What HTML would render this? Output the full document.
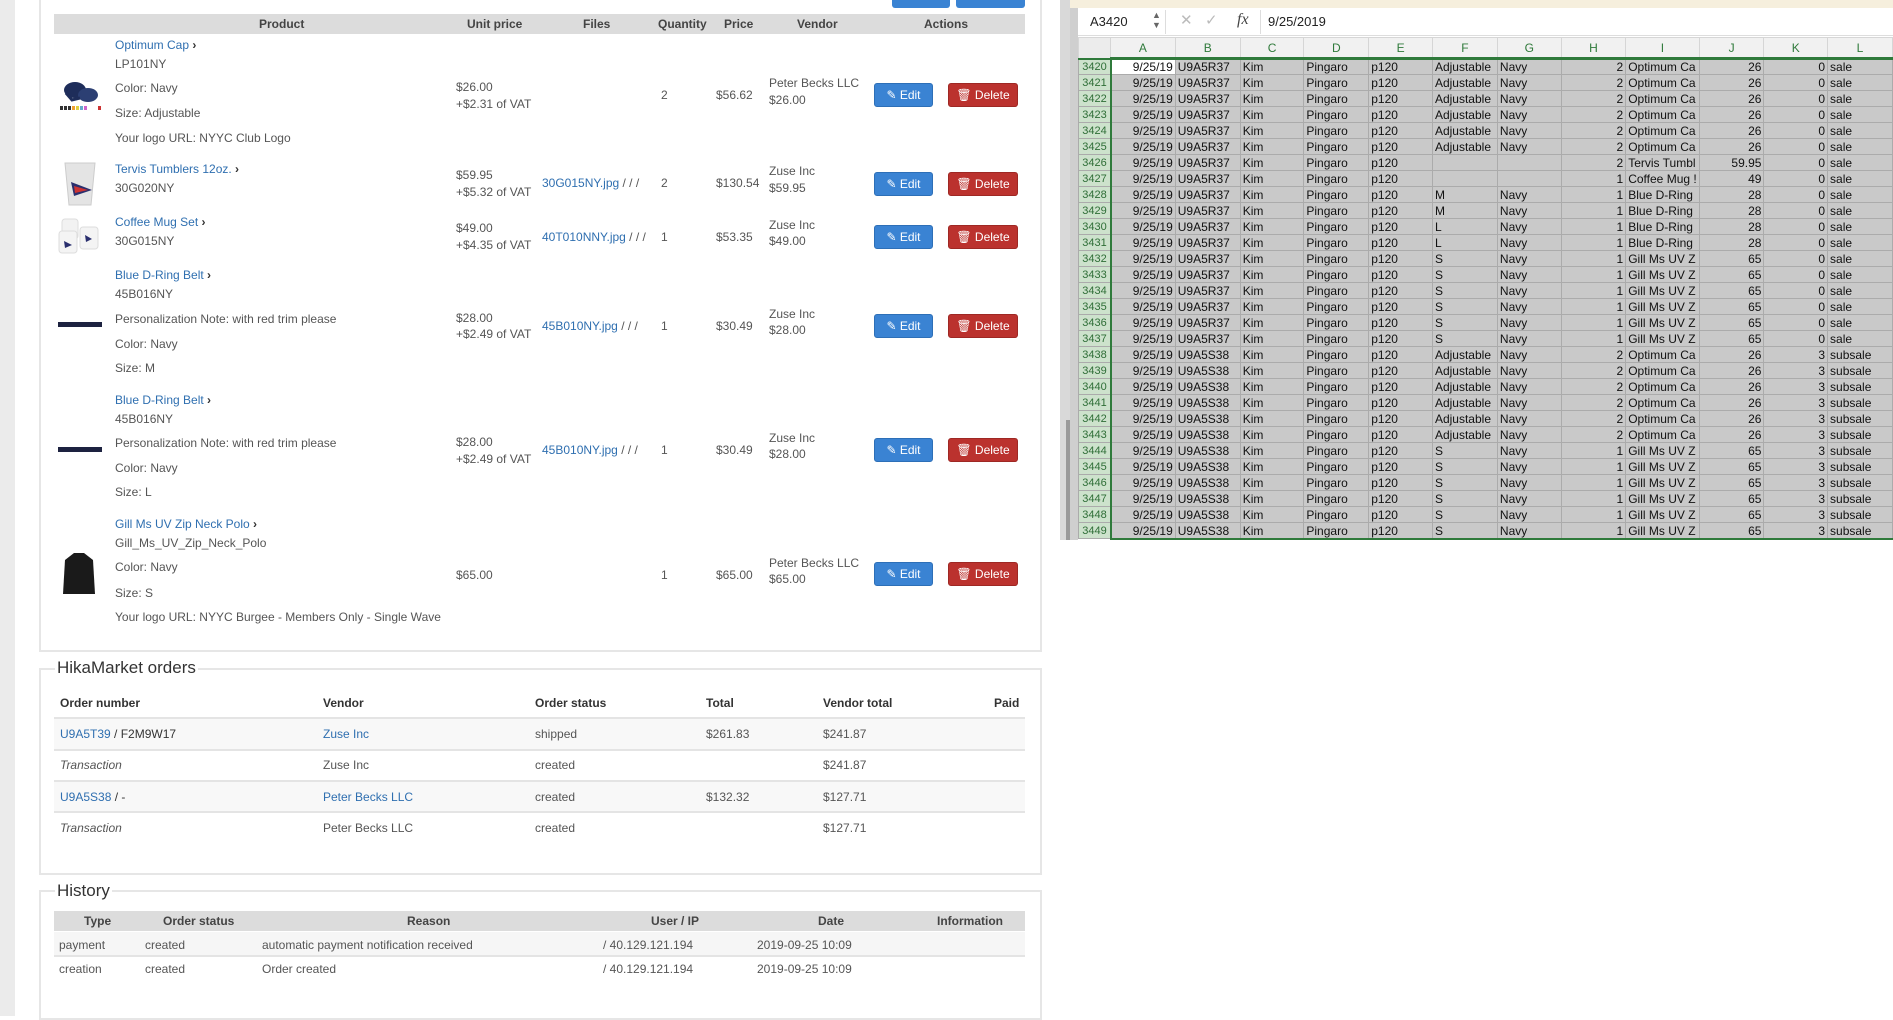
<!DOCTYPE html>
<html><head><meta charset="utf-8"><style>
*{box-sizing:border-box;margin:0;padding:0}
body{width:1893px;height:1016px;position:relative;overflow:hidden;background:#fff;font-family:"Liberation Sans",sans-serif;font-size:12px;color:#555}
.a{position:absolute;white-space:nowrap;line-height:14px}
.l{color:#2f6fb0}
.b{font-weight:bold;color:#333}
.btn{position:absolute;height:24px;border-radius:3px;color:#fff;font-size:12px;line-height:22px;text-align:center}
.ed{width:59px;background:#3a83d3;border:1px solid #2d6fb7}
.de{width:70px;background:#bb322e;border:1px solid #9e2824}
.th{position:absolute;background:#dcdcdc}
.fs{position:absolute;border:2px solid #e6e6e6}
.lg{position:absolute;background:#fff;font-size:17px;color:#333;padding:0 2px;line-height:20px}
.hl{position:absolute;height:2px;background:#e4e4e4}
table.x{position:absolute;left:1078px;top:37px;border-collapse:collapse;font-family:"Liberation Sans Narrow","Liberation Sans",sans-serif;font-size:12px;color:#111;table-layout:fixed}
table.x td{height:16px;border:1px solid #ababab;background:#c9c9c9;padding:0 2px;line-height:14px;overflow:hidden;white-space:nowrap}
table.x td.n{background:#cde2cc;color:#2f6e37;font-size:11px;text-align:center;padding:0}
table.x td.r{text-align:right}
table.x tr.h td{height:21px;background:#f1f1f1;color:#2f7a3b;text-align:center;border-color:#d6d6d6;border-bottom:2px solid #2f7a3b}
</style></head><body>
<!-- left page -->
<div style="position:absolute;left:0;top:0;width:15px;height:1016px;background:#ebebeb"></div>
<div style="position:absolute;left:1060px;top:0;width:18px;height:540px;background:#d9d9d9"></div>
<div style="position:absolute;left:1066px;top:420px;width:5px;height:120px;background:#9a9a9a"></div>

<div style="position:absolute;left:892px;top:0;width:58px;height:8px;background:#3a83d3;border-radius:0 0 3px 3px"></div>
<div style="position:absolute;left:956px;top:0;width:69px;height:8px;background:#3a83d3;border-radius:0 0 3px 3px"></div>

<div style="position:absolute;left:39px;top:0;width:1003px;height:652px;border:2px solid #e6e6e6;border-top:none"></div>
<div class="th" style="left:54px;top:14px;width:971px;height:20px"></div>
<div class="a b" style="left:259px;top:17px;font-weight:bold;color:#444">Product</div>
<div class="a b" style="left:467px;top:17px;color:#444">Unit price</div>
<div class="a b" style="left:583px;top:17px;color:#444">Files</div>
<div class="a b" style="left:658px;top:17px;color:#444">Quantity</div>
<div class="a b" style="left:724px;top:17px;color:#444">Price</div>
<div class="a b" style="left:797px;top:17px;color:#444">Vendor</div>
<div class="a b" style="left:924px;top:17px;color:#444">Actions</div>

<!-- images -->
<svg style="position:absolute;left:58px;top:78px" width="46" height="36"><ellipse cx="17" cy="12" rx="11" ry="8" fill="#1e2d5a"/><ellipse cx="30" cy="17" rx="10" ry="7" fill="#2c3f73"/><path d="M8 15 L14 22 L22 20" stroke="#1e2d5a" stroke-width="3" fill="none"/><g fill="#333"><rect x="2" y="28" width="3" height="4"/><rect x="6" y="28" width="3" height="4"/><rect x="10" y="28" width="3" height="4"/></g><rect x="14" y="28" width="3" height="4" fill="#f0a030"/><rect x="18" y="28" width="3" height="4" fill="#e0d040"/><rect x="22" y="28" width="3" height="4" fill="#6ac"/><rect x="26" y="28" width="3" height="4" fill="#c6c"/><rect x="40" y="28" width="3" height="4" fill="#c33"/></svg>
<svg style="position:absolute;left:62px;top:160px" width="36" height="48"><path d="M3 3 L33 3 L29 45 L7 45 Z" fill="#e4e4e4" stroke="#ccc"/><path d="M9 22 L30 30 L12 36 Z" fill="#2a2f6e"/><path d="M12 26 L26 30 L13 33Z" fill="#c33"/></svg>
<svg style="position:absolute;left:56px;top:215px" width="46" height="40"><rect x="6" y="4" width="16" height="20" rx="3" fill="#f2f2f2" stroke="#ddd"/><rect x="3" y="16" width="18" height="22" rx="3" fill="#f4f4f4" stroke="#ddd"/><rect x="24" y="12" width="18" height="22" rx="3" fill="#f4f4f4" stroke="#ddd"/><path d="M8 26 L16 30 L9 33Z" fill="#2a2f6e"/><path d="M29 20 L36 24 L30 27Z" fill="#2a2f6e"/></svg>
<div style="position:absolute;left:58px;top:322px;width:44px;height:5px;background:#1d2240"></div>
<div style="position:absolute;left:58px;top:447px;width:44px;height:5px;background:#1d2240"></div>
<svg style="position:absolute;left:62px;top:552px" width="34" height="44"><path d="M12 1 L22 1 L31 8 L33 42 L1 42 L3 8 Z" fill="#1a1a1a"/></svg>

<!-- row1 -->
<div class="a l" style="left:115px;top:38px">Optimum Cap <b style="color:#333">›</b></div>
<div class="a" style="left:115px;top:57px">LP101NY</div>
<div class="a" style="left:115px;top:81px">Color: Navy</div>
<div class="a" style="left:115px;top:106px">Size: Adjustable</div>
<div class="a" style="left:115px;top:131px">Your logo URL: NYYC Club Logo</div>
<div class="a" style="left:456px;top:80px">$26.00</div><div class="a" style="left:456px;top:97px">+$2.31 of VAT</div>
<div class="a" style="left:661px;top:88px">2</div><div class="a" style="left:716px;top:88px">$56.62</div>
<div class="a" style="left:769px;top:76px">Peter Becks LLC</div><div class="a" style="left:769px;top:93px">$26.00</div>
<!-- row2 -->
<div class="a l" style="left:115px;top:162px">Tervis Tumblers 12oz. <b style="color:#333">›</b></div>
<div class="a" style="left:115px;top:181px">30G020NY</div>
<div class="a" style="left:456px;top:168px">$59.95</div><div class="a" style="left:456px;top:185px">+$5.32 of VAT</div>
<div class="a l" style="left:542px;top:176px">30G015NY.jpg <span style="color:#555">/ / /</span></div>
<div class="a" style="left:661px;top:176px">2</div><div class="a" style="left:716px;top:176px">$130.54</div>
<div class="a" style="left:769px;top:164px">Zuse Inc</div><div class="a" style="left:769px;top:181px">$59.95</div>
<!-- row3 -->
<div class="a l" style="left:115px;top:215px">Coffee Mug Set <b style="color:#333">›</b></div>
<div class="a" style="left:115px;top:234px">30G015NY</div>
<div class="a" style="left:456px;top:221px">$49.00</div><div class="a" style="left:456px;top:238px">+$4.35 of VAT</div>
<div class="a l" style="left:542px;top:230px">40T010NNY.jpg <span style="color:#555">/ / /</span></div>
<div class="a" style="left:661px;top:230px">1</div><div class="a" style="left:716px;top:230px">$53.35</div>
<div class="a" style="left:769px;top:218px">Zuse Inc</div><div class="a" style="left:769px;top:234px">$49.00</div>
<!-- row4 -->
<div class="a l" style="left:115px;top:268px">Blue D-Ring Belt <b style="color:#333">›</b></div>
<div class="a" style="left:115px;top:287px">45B016NY</div>
<div class="a" style="left:115px;top:312px">Personalization Note: with red trim please</div>
<div class="a" style="left:115px;top:337px">Color: Navy</div>
<div class="a" style="left:115px;top:361px">Size: M</div>
<div class="a" style="left:456px;top:311px">$28.00</div><div class="a" style="left:456px;top:327px">+$2.49 of VAT</div>
<div class="a l" style="left:542px;top:319px">45B010NY.jpg <span style="color:#555">/ / /</span></div>
<div class="a" style="left:661px;top:319px">1</div><div class="a" style="left:716px;top:319px">$30.49</div>
<div class="a" style="left:769px;top:307px">Zuse Inc</div><div class="a" style="left:769px;top:323px">$28.00</div>
<!-- row5 -->
<div class="a l" style="left:115px;top:393px">Blue D-Ring Belt <b style="color:#333">›</b></div>
<div class="a" style="left:115px;top:412px">45B016NY</div>
<div class="a" style="left:115px;top:436px">Personalization Note: with red trim please</div>
<div class="a" style="left:115px;top:461px">Color: Navy</div>
<div class="a" style="left:115px;top:485px">Size: L</div>
<div class="a" style="left:456px;top:435px">$28.00</div><div class="a" style="left:456px;top:452px">+$2.49 of VAT</div>
<div class="a l" style="left:542px;top:443px">45B010NY.jpg <span style="color:#555">/ / /</span></div>
<div class="a" style="left:661px;top:443px">1</div><div class="a" style="left:716px;top:443px">$30.49</div>
<div class="a" style="left:769px;top:431px">Zuse Inc</div><div class="a" style="left:769px;top:447px">$28.00</div>
<!-- row6 -->
<div class="a l" style="left:115px;top:517px">Gill Ms UV Zip Neck Polo <b style="color:#333">›</b></div>
<div class="a" style="left:115px;top:536px">Gill_Ms_UV_Zip_Neck_Polo</div>
<div class="a" style="left:115px;top:560px">Color: Navy</div>
<div class="a" style="left:115px;top:586px">Size: S</div>
<div class="a" style="left:115px;top:610px">Your logo URL: NYYC Burgee - Members Only - Single Wave</div>
<div class="a" style="left:456px;top:568px">$65.00</div>
<div class="a" style="left:661px;top:568px">1</div><div class="a" style="left:716px;top:568px">$65.00</div>
<div class="a" style="left:769px;top:556px">Peter Becks LLC</div><div class="a" style="left:769px;top:572px">$65.00</div>

<!-- buttons -->
<div class="btn ed" style="left:874px;top:83px">✎ Edit</div><div class="btn de" style="left:948px;top:83px">🗑 Delete</div>
<div class="btn ed" style="left:874px;top:172px">✎ Edit</div><div class="btn de" style="left:948px;top:172px">🗑 Delete</div>
<div class="btn ed" style="left:874px;top:225px">✎ Edit</div><div class="btn de" style="left:948px;top:225px">🗑 Delete</div>
<div class="btn ed" style="left:874px;top:314px">✎ Edit</div><div class="btn de" style="left:948px;top:314px">🗑 Delete</div>
<div class="btn ed" style="left:874px;top:438px">✎ Edit</div><div class="btn de" style="left:948px;top:438px">🗑 Delete</div>
<div class="btn ed" style="left:874px;top:562px">✎ Edit</div><div class="btn de" style="left:948px;top:562px">🗑 Delete</div>

<!-- HikaMarket orders -->
<div class="fs" style="left:39px;top:668px;width:1003px;height:207px"></div>
<div class="lg" style="left:55px;top:658px">HikaMarket orders</div>
<div class="a b" style="left:60px;top:696px">Order number</div>
<div class="a b" style="left:323px;top:696px">Vendor</div>
<div class="a b" style="left:535px;top:696px">Order status</div>
<div class="a b" style="left:706px;top:696px">Total</div>
<div class="a b" style="left:823px;top:696px">Vendor total</div>
<div class="a b" style="left:994px;top:696px">Paid</div>
<div style="position:absolute;left:54px;top:718px;width:971px;height:32px;background:#f8f8f8"></div>
<div style="position:absolute;left:54px;top:781px;width:971px;height:31px;background:#f8f8f8"></div>
<div class="hl" style="left:54px;top:717px;width:971px"></div>
<div class="hl" style="left:54px;top:749px;width:971px"></div>
<div class="hl" style="left:54px;top:780px;width:971px"></div>
<div class="hl" style="left:54px;top:811px;width:971px"></div>
<div class="a" style="left:60px;top:727px"><span class="l">U9A5T39</span> <span style="color:#333">/ F2M9W17</span></div>
<div class="a l" style="left:323px;top:727px">Zuse Inc</div>
<div class="a" style="left:535px;top:727px">shipped</div><div class="a" style="left:706px;top:727px">$261.83</div><div class="a" style="left:823px;top:727px">$241.87</div>
<div class="a" style="left:60px;top:758px;font-style:italic">Transaction</div>
<div class="a" style="left:323px;top:758px">Zuse Inc</div><div class="a" style="left:535px;top:758px">created</div><div class="a" style="left:823px;top:758px">$241.87</div>
<div class="a" style="left:60px;top:790px"><span class="l">U9A5S38</span> <span style="color:#333">/ -</span></div>
<div class="a l" style="left:323px;top:790px">Peter Becks LLC</div>
<div class="a" style="left:535px;top:790px">created</div><div class="a" style="left:706px;top:790px">$132.32</div><div class="a" style="left:823px;top:790px">$127.71</div>
<div class="a" style="left:60px;top:821px;font-style:italic">Transaction</div>
<div class="a" style="left:323px;top:821px">Peter Becks LLC</div><div class="a" style="left:535px;top:821px">created</div><div class="a" style="left:823px;top:821px">$127.71</div>

<!-- History -->
<div class="fs" style="left:39px;top:890px;width:1003px;height:130px"></div>
<div class="lg" style="left:55px;top:881px">History</div>
<div class="th" style="left:54px;top:911px;width:971px;height:20px"></div>
<div class="a b" style="left:84px;top:914px;color:#444">Type</div>
<div class="a b" style="left:163px;top:914px;color:#444">Order status</div>
<div class="a b" style="left:407px;top:914px;color:#444">Reason</div>
<div class="a b" style="left:651px;top:914px;color:#444">User / IP</div>
<div class="a b" style="left:818px;top:914px;color:#444">Date</div>
<div class="a b" style="left:937px;top:914px;color:#444">Information</div>
<div style="position:absolute;left:54px;top:932px;width:971px;height:25px;background:#f6f6f6;border-bottom:2px solid #e4e4e4"></div>
<div class="a" style="left:59px;top:938px">payment</div><div class="a" style="left:145px;top:938px">created</div><div class="a" style="left:262px;top:938px">automatic payment notification received</div><div class="a" style="left:603px;top:938px">/ 40.129.121.194</div><div class="a" style="left:757px;top:938px">2019-09-25 10:09</div>
<div class="a" style="left:59px;top:962px">creation</div><div class="a" style="left:145px;top:962px">created</div><div class="a" style="left:262px;top:962px">Order created</div><div class="a" style="left:603px;top:962px">/ 40.129.121.194</div><div class="a" style="left:757px;top:962px">2019-09-25 10:09</div>

<!-- spreadsheet -->
<div style="position:absolute;left:1070px;top:0;width:823px;height:8px;background:#f6efdd"></div>
<div style="position:absolute;left:1070px;top:8px;width:8px;height:532px;background:#cfcfcf"></div>
<div style="position:absolute;left:1078px;top:8px;width:815px;height:28px;background:#fff;border-bottom:1px solid #ddd"></div>
<div class="a" style="left:1090px;top:15px;font-size:13px;color:#222">A3420</div>
<div class="a" style="left:1152px;top:10px;font-size:9px;color:#666;line-height:10px">▲<br>▼</div>
<div style="position:absolute;left:1165px;top:10px;width:1px;height:24px;background:#ddd"></div>
<div class="a" style="left:1180px;top:14px;font-size:15px;color:#bbb">✕</div>
<div class="a" style="left:1205px;top:14px;font-size:15px;color:#bbb">✓</div>
<div class="a" style="left:1237px;top:13px;font-size:16px;color:#444;font-family:'Liberation Serif',serif;font-style:italic">fx</div>
<div style="position:absolute;left:1260px;top:10px;width:1px;height:24px;background:#ddd"></div>
<div class="a" style="left:1268px;top:15px;font-size:13px;color:#222">9/25/2019</div>
<div style="position:absolute;left:1078px;top:37px;width:32px;height:21px;background:#f1f1f1"></div>
<table class="x">
<colgroup><col style="width:32px"><col style="width:65px"><col style="width:65px"><col style="width:64px"><col style="width:65px"><col style="width:64px"><col style="width:65px"><col style="width:64px"><col style="width:65px"><col style="width:64px"><col style="width:65px"><col style="width:64px"><col style="width:65px"></colgroup>
<tr class="h"><td style="background:#ececec;border-bottom-color:#2f7a3b"></td><td>A</td><td>B</td><td>C</td><td>D</td><td>E</td><td>F</td><td>G</td><td>H</td><td>I</td><td>J</td><td>K</td><td>L</td></tr>
<tr><td class="n">3420</td><td class="r" style="background:#fff">9/25/19</td><td>U9A5R37</td><td>Kim</td><td>Pingaro</td><td>p120</td><td>Adjustable</td><td>Navy</td><td class="r">2</td><td>Optimum Ca</td><td class="r">26</td><td class="r">0</td><td>sale</td></tr>
<tr><td class="n">3421</td><td class="r">9/25/19</td><td>U9A5R37</td><td>Kim</td><td>Pingaro</td><td>p120</td><td>Adjustable</td><td>Navy</td><td class="r">2</td><td>Optimum Ca</td><td class="r">26</td><td class="r">0</td><td>sale</td></tr>
<tr><td class="n">3422</td><td class="r">9/25/19</td><td>U9A5R37</td><td>Kim</td><td>Pingaro</td><td>p120</td><td>Adjustable</td><td>Navy</td><td class="r">2</td><td>Optimum Ca</td><td class="r">26</td><td class="r">0</td><td>sale</td></tr>
<tr><td class="n">3423</td><td class="r">9/25/19</td><td>U9A5R37</td><td>Kim</td><td>Pingaro</td><td>p120</td><td>Adjustable</td><td>Navy</td><td class="r">2</td><td>Optimum Ca</td><td class="r">26</td><td class="r">0</td><td>sale</td></tr>
<tr><td class="n">3424</td><td class="r">9/25/19</td><td>U9A5R37</td><td>Kim</td><td>Pingaro</td><td>p120</td><td>Adjustable</td><td>Navy</td><td class="r">2</td><td>Optimum Ca</td><td class="r">26</td><td class="r">0</td><td>sale</td></tr>
<tr><td class="n">3425</td><td class="r">9/25/19</td><td>U9A5R37</td><td>Kim</td><td>Pingaro</td><td>p120</td><td>Adjustable</td><td>Navy</td><td class="r">2</td><td>Optimum Ca</td><td class="r">26</td><td class="r">0</td><td>sale</td></tr>
<tr><td class="n">3426</td><td class="r">9/25/19</td><td>U9A5R37</td><td>Kim</td><td>Pingaro</td><td>p120</td><td></td><td></td><td class="r">2</td><td>Tervis Tumbl</td><td class="r">59.95</td><td class="r">0</td><td>sale</td></tr>
<tr><td class="n">3427</td><td class="r">9/25/19</td><td>U9A5R37</td><td>Kim</td><td>Pingaro</td><td>p120</td><td></td><td></td><td class="r">1</td><td>Coffee Mug !</td><td class="r">49</td><td class="r">0</td><td>sale</td></tr>
<tr><td class="n">3428</td><td class="r">9/25/19</td><td>U9A5R37</td><td>Kim</td><td>Pingaro</td><td>p120</td><td>M</td><td>Navy</td><td class="r">1</td><td>Blue D-Ring</td><td class="r">28</td><td class="r">0</td><td>sale</td></tr>
<tr><td class="n">3429</td><td class="r">9/25/19</td><td>U9A5R37</td><td>Kim</td><td>Pingaro</td><td>p120</td><td>M</td><td>Navy</td><td class="r">1</td><td>Blue D-Ring</td><td class="r">28</td><td class="r">0</td><td>sale</td></tr>
<tr><td class="n">3430</td><td class="r">9/25/19</td><td>U9A5R37</td><td>Kim</td><td>Pingaro</td><td>p120</td><td>L</td><td>Navy</td><td class="r">1</td><td>Blue D-Ring</td><td class="r">28</td><td class="r">0</td><td>sale</td></tr>
<tr><td class="n">3431</td><td class="r">9/25/19</td><td>U9A5R37</td><td>Kim</td><td>Pingaro</td><td>p120</td><td>L</td><td>Navy</td><td class="r">1</td><td>Blue D-Ring</td><td class="r">28</td><td class="r">0</td><td>sale</td></tr>
<tr><td class="n">3432</td><td class="r">9/25/19</td><td>U9A5R37</td><td>Kim</td><td>Pingaro</td><td>p120</td><td>S</td><td>Navy</td><td class="r">1</td><td>Gill Ms UV Z</td><td class="r">65</td><td class="r">0</td><td>sale</td></tr>
<tr><td class="n">3433</td><td class="r">9/25/19</td><td>U9A5R37</td><td>Kim</td><td>Pingaro</td><td>p120</td><td>S</td><td>Navy</td><td class="r">1</td><td>Gill Ms UV Z</td><td class="r">65</td><td class="r">0</td><td>sale</td></tr>
<tr><td class="n">3434</td><td class="r">9/25/19</td><td>U9A5R37</td><td>Kim</td><td>Pingaro</td><td>p120</td><td>S</td><td>Navy</td><td class="r">1</td><td>Gill Ms UV Z</td><td class="r">65</td><td class="r">0</td><td>sale</td></tr>
<tr><td class="n">3435</td><td class="r">9/25/19</td><td>U9A5R37</td><td>Kim</td><td>Pingaro</td><td>p120</td><td>S</td><td>Navy</td><td class="r">1</td><td>Gill Ms UV Z</td><td class="r">65</td><td class="r">0</td><td>sale</td></tr>
<tr><td class="n">3436</td><td class="r">9/25/19</td><td>U9A5R37</td><td>Kim</td><td>Pingaro</td><td>p120</td><td>S</td><td>Navy</td><td class="r">1</td><td>Gill Ms UV Z</td><td class="r">65</td><td class="r">0</td><td>sale</td></tr>
<tr><td class="n">3437</td><td class="r">9/25/19</td><td>U9A5R37</td><td>Kim</td><td>Pingaro</td><td>p120</td><td>S</td><td>Navy</td><td class="r">1</td><td>Gill Ms UV Z</td><td class="r">65</td><td class="r">0</td><td>sale</td></tr>
<tr><td class="n">3438</td><td class="r">9/25/19</td><td>U9A5S38</td><td>Kim</td><td>Pingaro</td><td>p120</td><td>Adjustable</td><td>Navy</td><td class="r">2</td><td>Optimum Ca</td><td class="r">26</td><td class="r">3</td><td>subsale</td></tr>
<tr><td class="n">3439</td><td class="r">9/25/19</td><td>U9A5S38</td><td>Kim</td><td>Pingaro</td><td>p120</td><td>Adjustable</td><td>Navy</td><td class="r">2</td><td>Optimum Ca</td><td class="r">26</td><td class="r">3</td><td>subsale</td></tr>
<tr><td class="n">3440</td><td class="r">9/25/19</td><td>U9A5S38</td><td>Kim</td><td>Pingaro</td><td>p120</td><td>Adjustable</td><td>Navy</td><td class="r">2</td><td>Optimum Ca</td><td class="r">26</td><td class="r">3</td><td>subsale</td></tr>
<tr><td class="n">3441</td><td class="r">9/25/19</td><td>U9A5S38</td><td>Kim</td><td>Pingaro</td><td>p120</td><td>Adjustable</td><td>Navy</td><td class="r">2</td><td>Optimum Ca</td><td class="r">26</td><td class="r">3</td><td>subsale</td></tr>
<tr><td class="n">3442</td><td class="r">9/25/19</td><td>U9A5S38</td><td>Kim</td><td>Pingaro</td><td>p120</td><td>Adjustable</td><td>Navy</td><td class="r">2</td><td>Optimum Ca</td><td class="r">26</td><td class="r">3</td><td>subsale</td></tr>
<tr><td class="n">3443</td><td class="r">9/25/19</td><td>U9A5S38</td><td>Kim</td><td>Pingaro</td><td>p120</td><td>Adjustable</td><td>Navy</td><td class="r">2</td><td>Optimum Ca</td><td class="r">26</td><td class="r">3</td><td>subsale</td></tr>
<tr><td class="n">3444</td><td class="r">9/25/19</td><td>U9A5S38</td><td>Kim</td><td>Pingaro</td><td>p120</td><td>S</td><td>Navy</td><td class="r">1</td><td>Gill Ms UV Z</td><td class="r">65</td><td class="r">3</td><td>subsale</td></tr>
<tr><td class="n">3445</td><td class="r">9/25/19</td><td>U9A5S38</td><td>Kim</td><td>Pingaro</td><td>p120</td><td>S</td><td>Navy</td><td class="r">1</td><td>Gill Ms UV Z</td><td class="r">65</td><td class="r">3</td><td>subsale</td></tr>
<tr><td class="n">3446</td><td class="r">9/25/19</td><td>U9A5S38</td><td>Kim</td><td>Pingaro</td><td>p120</td><td>S</td><td>Navy</td><td class="r">1</td><td>Gill Ms UV Z</td><td class="r">65</td><td class="r">3</td><td>subsale</td></tr>
<tr><td class="n">3447</td><td class="r">9/25/19</td><td>U9A5S38</td><td>Kim</td><td>Pingaro</td><td>p120</td><td>S</td><td>Navy</td><td class="r">1</td><td>Gill Ms UV Z</td><td class="r">65</td><td class="r">3</td><td>subsale</td></tr>
<tr><td class="n">3448</td><td class="r">9/25/19</td><td>U9A5S38</td><td>Kim</td><td>Pingaro</td><td>p120</td><td>S</td><td>Navy</td><td class="r">1</td><td>Gill Ms UV Z</td><td class="r">65</td><td class="r">3</td><td>subsale</td></tr>
<tr><td class="n">3449</td><td class="r">9/25/19</td><td>U9A5S38</td><td>Kim</td><td>Pingaro</td><td>p120</td><td>S</td><td>Navy</td><td class="r">1</td><td>Gill Ms UV Z</td><td class="r">65</td><td class="r">3</td><td>subsale</td></tr>
</table>
<div style="position:absolute;left:1110px;top:57px;width:783px;height:483px;border:2px solid #2f7a3b;border-right:none"></div>
</body></html>
